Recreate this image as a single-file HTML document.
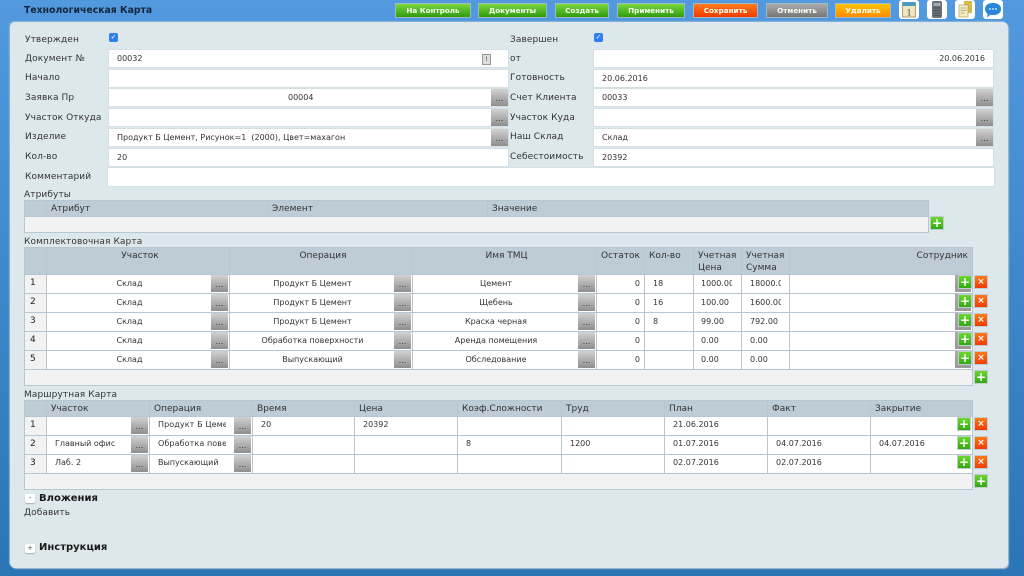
<!DOCTYPE html>
<html lang="ru"><head><meta charset="utf-8"><title>Технологическая Карта</title>
<style>
html,body{margin:0;padding:0;width:1024px;height:576px;overflow:hidden}
body{position:relative;background:linear-gradient(#5299df,#2a75b5);font-family:"DejaVu Sans","Liberation Sans",sans-serif;color:#333;font-size:8px}
#w{position:absolute;left:0;top:0;width:1024px;height:576px;filter:blur(.35px)}
#p{position:absolute;left:10px;top:22px;width:998px;height:546px;background:#dde8ec;border-radius:5px;box-shadow:1px 1px 1px #a9c0d0,-1px -1px 1px #8fb4d6}
.a{position:absolute;white-space:nowrap}
.l{position:absolute;left:25px;font-size:9px;line-height:12px;white-space:nowrap;color:#333;letter-spacing:.1px}
.r{left:510px}
.i{position:absolute;background:#fff;height:17px;line-height:18px;box-shadow:0 0 0 1px #d5e0e4;white-space:nowrap;padding-left:8px;box-sizing:border-box}
.e{width:399px;left:109px}.f{width:399px;left:594px}
.b{position:absolute;width:17px;height:17px;background:linear-gradient(#d2d2d2,#8e8e8e);text-align:center;font-size:8px;line-height:20px;color:#333}
.g{position:absolute;top:4px;height:13px;line-height:13px;text-align:center;font-size:7.2px;font-weight:bold;color:#f4fff0;box-shadow:0 0 0 1px #9fb9c9;background:linear-gradient(#7bd83a,#2f9a10)}
.o{background:linear-gradient(#ff7a1a,#f23a00)}.y{background:linear-gradient(#aaa,#777)}.u{background:linear-gradient(#ffc400,#ff8a00)}
.ic{position:absolute;top:0;width:20px;height:19px;background:#fff;border-radius:3px}
table{position:absolute;left:24px;border-collapse:collapse;table-layout:fixed;font-size:8px}
td,th{border:1px solid #b7c7d1;padding:0;position:relative;overflow:visible;white-space:nowrap;box-sizing:border-box}
th{background:#bdccd5;font-weight:normal;font-size:9px;color:#333;text-align:left;padding-left:4px;vertical-align:top;line-height:12px;padding-top:2px;white-space:normal}
th.c{text-align:center}
td{background:#fff;height:19px;line-height:18px;padding-left:8px}
.rt td{line-height:16px;padding-bottom:2px}
td.n,.rt td.n{background:#f2f2f2;font-size:9px;padding-left:5px;padding-bottom:0;line-height:16px;vertical-align:top;color:#222}
td.c{text-align:center;padding:0 17px 0 0}
td.v{text-align:right;padding-right:4px}
tr.z td{background:#f2f2f2;height:16px}
.cp{display:block;overflow:hidden}
td .b{right:1px;top:0}
.pl,.x{position:absolute;width:12px;height:12px;font-size:12px;line-height:12px;text-align:center;font-weight:bold;color:#fff;box-shadow:0 0 0 1px #c0ccd0}
.pl{background:linear-gradient(#6bd82e,#34a813)}
.x{background:linear-gradient(#ff7a1a,#f23a00);font-size:9px}
.sh{position:absolute;width:16px;height:17px;background:linear-gradient(#aaa,#999)}
.t{position:absolute;left:25px;width:10px;height:9px;background:#fff;border-radius:2px;font-size:7px;line-height:9px;text-align:center;color:#555;box-shadow:0 1px 1px #aab}
.cb{position:absolute;width:9px;height:9px;background:#2f7ff0;border-radius:2px;color:#fff;font-size:7px;line-height:9px;text-align:center}
</style></head><body><div id="w">
<div class="a" style="left:24px;top:4px;font-size:9.3px;font-weight:bold;line-height:13px;color:#14263a">Технологическая Карта</div>

<div class="g" style="left:396px;width:74px">На Контроль</div>
<div class="g" style="left:479px;width:67px">Документы</div>
<div class="g" style="left:556px;width:52px">Создать</div>
<div class="g" style="left:618px;width:66px">Применить</div>
<div class="g o" style="left:694px;width:63px">Сохранить</div>
<div class="g y" style="left:767px;width:60px">Отменить</div>
<div class="g u" style="left:836px;width:54px">Удалить</div>

<div class="ic" style="left:899px"><svg width="20" height="19"><rect x="3.500" y="3" width="13" height="14" fill="#f0e6c0" stroke="#8a7a50" stroke-width=".7"/><rect x="3.500" y="2" width="13" height="4" fill="#4a9ac0"/><text x="10" y="15.500" font-size="9" text-anchor="middle" font-family="Liberation Serif" fill="#333">1</text></svg></div>
<div class="ic" style="left:927px"><svg width="20" height="19"><rect x="5" y="1" width="10" height="17" rx="2" fill="#6a7078"/><rect x="6.500" y="3" width="7" height="3" fill="#a4acb4"/><path d="M6.500 8h7M6.500 10.500h7M6.500 13h7M6.500 15.500h7" stroke="#4c5258" stroke-width="1"/></svg></div>
<div class="ic" style="left:955px"><svg width="20" height="19"><rect x="9" y="1" width="8" height="12" fill="#d8b850"/><rect x="4" y="5" width="9" height="12" fill="#f6eeb8" stroke="#a89a60" stroke-width=".6"/><path d="M5.500 8h6M5.500 10.500h6M5.500 13h4" stroke="#998" stroke-width=".8"/></svg></div>
<div class="ic" style="left:983px"><svg width="20" height="19"><path d="M10 3c5 0 8 2.300 8 6s-3 6-8 6c-1 0-2-.1-2.800-.3L4 17.500l.6-3.800C3 12.600 2 11 2 9c0-3.700 3-6 8-6z" fill="#2a86d8"/><circle cx="7" cy="9" r=".9" fill="#dff"/><circle cx="10" cy="9" r=".9" fill="#dff"/><circle cx="13" cy="9" r=".9" fill="#dff"/></svg></div>

<div id="p"></div>

<div class="l" style="top:34px">Утвержден</div><div class="cb" style="left:109px;top:33px">✓</div>
<div class="l" style="top:53px">Документ №</div><div class="i e" style="top:50px">00032<span class="a" style="left:373px;top:4px;width:7px;height:9px;border:1px solid #999;background:#ddd;font-size:6px;line-height:9px;text-align:center">!</span></div>
<div class="l" style="top:72px">Начало</div><div class="i e" style="top:70px"></div>
<div class="l" style="top:92px">Заявка Пр</div><div class="i e" style="top:89px;padding-left:179px">00004</div><div class="b" style="left:491px;top:89px">...</div>
<div class="l" style="top:112px">Участок Откуда</div><div class="i e" style="top:109px"></div><div class="b" style="left:491px;top:109px">...</div>
<div class="l" style="top:131px">Изделие</div><div class="i e" style="top:129px">Продукт Б Цемент, Рисунок=1&nbsp; (2000), Цвет=махагон</div><div class="b" style="left:491px;top:129px">...</div>
<div class="l" style="top:151px">Кол-во</div><div class="i e" style="top:149px">20</div>
<div class="l" style="top:171px">Комментарий</div><div class="i" style="left:108px;top:168px;width:886px;height:18px"></div>

<div class="l r" style="top:34px">Завершен</div><div class="cb" style="left:594px;top:33px">✓</div>
<div class="l r" style="top:53px">от</div><div class="i f" style="top:50px;text-align:right;padding-right:8px">20.06.2016</div>
<div class="l r" style="top:72px">Готовность</div><div class="i f" style="top:70px">20.06.2016</div>
<div class="l r" style="top:92px">Счет Клиента</div><div class="i f" style="top:89px">00033</div><div class="b" style="left:976px;top:89px">...</div>
<div class="l r" style="top:112px">Участок Куда</div><div class="i f" style="top:109px"></div><div class="b" style="left:976px;top:109px">...</div>
<div class="l r" style="top:131px">Наш Склад</div><div class="i f" style="top:129px">Склад</div><div class="b" style="left:976px;top:129px">...</div>
<div class="l r" style="top:151px">Себестоимость</div><div class="i f" style="top:149px">20392</div>

<div class="l" style="top:189px;left:24px">Атрибуты</div>
<table style="top:200px;width:904px"><colgroup><col style="width:22px"><col style="width:221px"><col style="width:220px"><col style="width:441px"></colgroup>
<tr><th style="height:16px"></th><th>Атрибут</th><th>Элемент</th><th>Значение</th></tr>
<tr class="z"><td colspan="4"></td></tr></table>
<div class="pl" style="left:931px;top:217px">+</div>

<div class="l" style="top:236px;left:24px">Комплектовочная Карта</div>
<table style="top:247px;width:948px"><colgroup><col style="width:22px"><col style="width:183px"><col style="width:183px"><col style="width:184px"><col style="width:48px"><col style="width:49px"><col style="width:48px"><col style="width:48px"><col style="width:183px"></colgroup>
<tr><th style="height:27px"></th><th class="c">Участок</th><th class="c">Операция</th><th class="c">Имя ТМЦ</th><th>Остаток</th><th>Кол-во</th><th>Учетная Цена</th><th>Учетная Сумма</th><th style="text-align:right;padding-right:4px">Сотрудник</th></tr>
<tr><td class="n">1</td><td class="c">Склад<span class="b">...</span></td><td class="c">Продукт Б Цемент<span class="b">...</span></td><td class="c">Цемент<span class="b">...</span></td><td class="v">0</td><td style="padding-left:8px">18</td><td style="padding-left:7px"><span class="cp" style="width:31px">1000.00</span></td><td style="padding-left:8px"><span class="cp" style="width:31px">18000.00</span></td><td></td></tr>
<tr><td class="n">2</td><td class="c">Склад<span class="b">...</span></td><td class="c">Продукт Б Цемент<span class="b">...</span></td><td class="c">Щебень<span class="b">...</span></td><td class="v">0</td><td style="padding-left:8px">16</td><td style="padding-left:7px"><span class="cp" style="width:31px">100.00</span></td><td style="padding-left:8px"><span class="cp" style="width:31px">1600.00</span></td><td></td></tr>
<tr><td class="n">3</td><td class="c">Склад<span class="b">...</span></td><td class="c">Продукт Б Цемент<span class="b">...</span></td><td class="c">Краска черная<span class="b">...</span></td><td class="v">0</td><td style="padding-left:8px">8</td><td style="padding-left:7px">99.00</td><td style="padding-left:8px">792.00</td><td></td></tr>
<tr><td class="n">4</td><td class="c">Склад<span class="b">...</span></td><td class="c">Обработка поверхности<span class="b">...</span></td><td class="c">Аренда помещения<span class="b">...</span></td><td class="v">0</td><td></td><td style="padding-left:7px">0.00</td><td style="padding-left:8px">0.00</td><td></td></tr>
<tr><td class="n">5</td><td class="c">Склад<span class="b">...</span></td><td class="c">Выпускающий<span class="b">...</span></td><td class="c">Обследование<span class="b">...</span></td><td class="v">0</td><td></td><td style="padding-left:7px">0.00</td><td style="padding-left:8px">0.00</td><td></td></tr>
<tr class="z"><td colspan="9"></td></tr></table>

<div class="sh" style="left:955px;top:275px"></div><div class="pl" style="left:959px;top:276px">+</div><div class="x" style="left:975px;top:276px">×</div>
<div class="sh" style="left:955px;top:294px"></div><div class="pl" style="left:959px;top:295px">+</div><div class="x" style="left:975px;top:295px">×</div>
<div class="sh" style="left:955px;top:313px"></div><div class="pl" style="left:959px;top:314px">+</div><div class="x" style="left:975px;top:314px">×</div>
<div class="sh" style="left:955px;top:332px"></div><div class="pl" style="left:959px;top:333px">+</div><div class="x" style="left:975px;top:333px">×</div>
<div class="sh" style="left:955px;top:351px"></div><div class="pl" style="left:959px;top:352px">+</div><div class="x" style="left:975px;top:352px">×</div>
<div class="pl" style="left:975px;top:371px">+</div>

<div class="l" style="top:389px;left:24px">Маршрутная Карта</div>
<table class="rt" style="top:400px;width:948px"><colgroup><col style="width:22px"><col style="width:103px"><col style="width:103px"><col style="width:102px"><col style="width:103px"><col style="width:104px"><col style="width:103px"><col style="width:103px"><col style="width:103px"><col style="width:102px"></colgroup>
<tr><th style="height:16px"></th><th>Участок</th><th>Операция</th><th>Время</th><th>Цена</th><th>Коэф.Сложности</th><th>Труд</th><th>План</th><th>Факт</th><th>Закрытие</th></tr>
<tr><td class="n">1</td><td><span class="b">...</span></td><td><span class="cp" style="width:68px;letter-spacing:.1px">Продукт Б Цемент</span><span class="b">...</span></td><td>20</td><td>20392</td><td></td><td></td><td>21.06.2016</td><td></td><td></td></tr>
<tr><td class="n">2</td><td>Главный офис<span class="b">...</span></td><td><span class="cp" style="width:68px;letter-spacing:.1px">Обработка поверхности</span><span class="b">...</span></td><td></td><td></td><td>8</td><td>1200</td><td>01.07.2016</td><td>04.07.2016</td><td>04.07.2016</td></tr>
<tr><td class="n">3</td><td>Лаб. 2<span class="b">...</span></td><td>Выпускающий<span class="b">...</span></td><td></td><td></td><td></td><td></td><td>02.07.2016</td><td>02.07.2016</td><td></td></tr>
<tr class="z"><td colspan="10"></td></tr></table>

<div class="pl" style="left:958px;top:418px">+</div><div class="x" style="left:975px;top:418px">×</div>
<div class="pl" style="left:958px;top:437px">+</div><div class="x" style="left:975px;top:437px">×</div>
<div class="pl" style="left:958px;top:456px">+</div><div class="x" style="left:975px;top:456px">×</div>
<div class="pl" style="left:975px;top:475px">+</div>

<div class="t" style="top:494px">-</div><div class="a" style="left:39px;top:492px;font-size:10px;font-weight:bold;line-height:13px;color:#1a1a1a">Вложения</div>
<div class="l" style="top:507px;left:24px">Добавить</div>
<div class="t" style="top:544px">+</div><div class="a" style="left:39px;top:541px;font-size:10px;font-weight:bold;line-height:13px;color:#1a1a1a">Инструкция</div>
</div></body></html>
